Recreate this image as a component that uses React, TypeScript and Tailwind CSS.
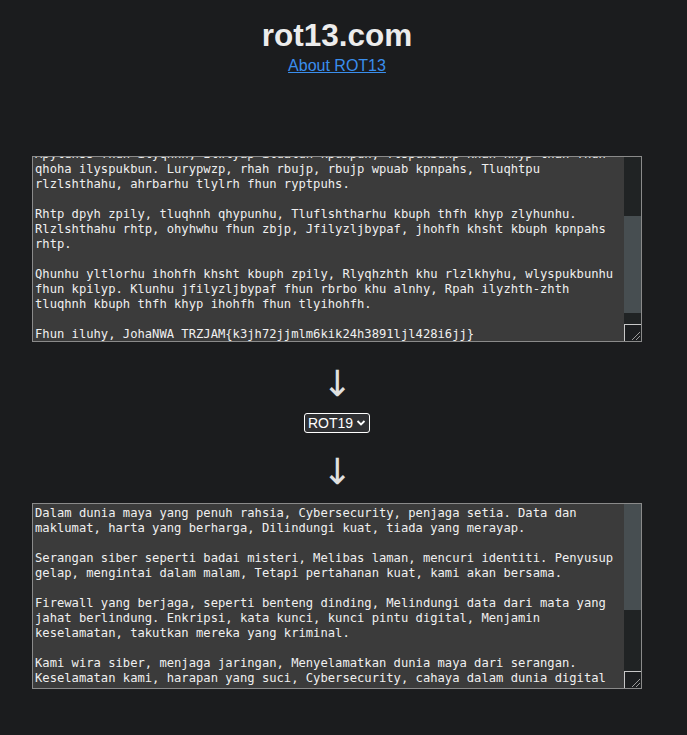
import { useState } from "react";

const plain = [
  "Dalam dunia maya yang penuh rahsia, Cybersecurity, penjaga setia. Data dan maklumat, harta yang berharga, Dilindungi kuat, tiada yang merayap.",
  "Serangan siber seperti badai misteri, Melibas laman, mencuri identiti. Penyusup gelap, mengintai dalam malam, Tetapi pertahanan kuat, kami akan bersama.",
  "Firewall yang berjaga, seperti benteng dinding, Melindungi data dari mata yang jahat berlindung. Enkripsi, kata kunci, kunci pintu digital, Menjamin keselamatan, takutkan mereka yang kriminal.",
  "Kami wira siber, menjaga jaringan, Menyelamatkan dunia maya dari serangan. Keselamatan kami, harapan yang suci, Cybersecurity, cahaya dalam dunia digital kami.",
  "Jangan remehkan bahaya dalam dunia siber, Kerjasama dan kesedaran, perlindungan yang diberi. Dengan cybersecurity yang kukuh dan tegar, Kita bersama-sama menjaga dunia maya dari bahaya yang merbahaya.",
  "Yang benar, ChatGPT MKSCTF{d3ca72ccfef6dbd24a3891ece428b6cc}",
].join("\n\n");

// geser huruf n langkah
const rot = (s: string, n: number) =>
  s.replace(/[a-zA-Z]/g, (c) => {
    const b = c <= "Z" ? 65 : 97;
    return String.fromCharCode(((c.charCodeAt(0) - b + n) % 26) + b);
  });

function FakeTextarea({
  text,
  scroll,
  thumbTop,
  thumbHeight,
}: {
  text: string;
  scroll: string;
  thumbTop: string;
  thumbHeight: string;
}) {
  return (
    <div className="flex w-[610px] h-[186px] border border-[#8a8a8a] bg-[#3b3b3b]">
      <div className="flex-1 overflow-hidden p-[2px]">
        <div
          className={`whitespace-pre-wrap break-words text-[12.16px] leading-[15px] text-[#f0f0f0] ${scroll}`}
          style={{ fontFamily: '"DejaVu Sans Mono", monospace' }}
        >
          {text}
        </div>
      </div>
      <div className="w-[17px] flex flex-col bg-[#202324]">
        <div className={thumbTop} />
        <div className={`bg-[#474e51] ${thumbHeight}`} />
        <div className="flex-1" />
        <div className="h-[17px] border-t border-l border-[#c8c8c8] bg-[#1c1e20] flex items-end justify-end">
          <svg width="12" height="12" viewBox="0 0 12 12">
            <line x1="3" y1="11" x2="11" y2="3" stroke="#9a9a9a" strokeWidth="1" />
            <line x1="7" y1="11" x2="11" y2="7" stroke="#9a9a9a" strokeWidth="1" />
          </svg>
        </div>
      </div>
    </div>
  );
}

export default function App() {
  const [mode] = useState("ROT19");
  const input = rot(plain, 7);

  return (
    <div
      className="min-h-screen bg-[#1b1c1e]"
      style={{ fontFamily: '"Liberation Sans", Arial, sans-serif' }}
    >
      <div className="w-[674px] flex flex-col items-center">
        <h1 className="mt-[17px] text-[31.5px] leading-[36px] font-bold text-[#ececec]">rot13.com</h1>
        <a href="#" className="mt-[4px] text-[16px] leading-[18px] text-[#3a8eed] underline">
          About ROT13
        </a>

        <div className="mt-[81px]">
          <FakeTextarea text={input} scroll="-mt-[102px]" thumbTop="h-[59px]" thumbHeight="h-[97px]" />
        </div>

        <div
          className="mt-[24px] text-[36px] leading-[36px] text-[#e0e0e0]"
          style={{ fontFamily: '"DejaVu Sans", sans-serif' }}
        >
          ↓
        </div>

        <div className="mt-[11px] h-[20px] px-[3px] flex items-center gap-[3px] rounded-[3px] border border-white bg-[#2f3033] text-[14px] text-white">
          <span>{mode}</span>
          <svg width="10" height="8" viewBox="0 0 10 8">
            <path d="M1.5 2 L5 5.5 L8.5 2" fill="none" stroke="white" strokeWidth="1.8" />
          </svg>
        </div>

        <div
          className="mt-[21px] text-[36px] leading-[36px] text-[#e0e0e0]"
          style={{ fontFamily: '"DejaVu Sans", sans-serif' }}
        >
          ↓
        </div>

        <div className="mt-[13px] mb-[46px]">
          <FakeTextarea text={plain} scroll="" thumbTop="h-0" thumbHeight="h-[106px]" />
        </div>
      </div>
    </div>
  );
}
